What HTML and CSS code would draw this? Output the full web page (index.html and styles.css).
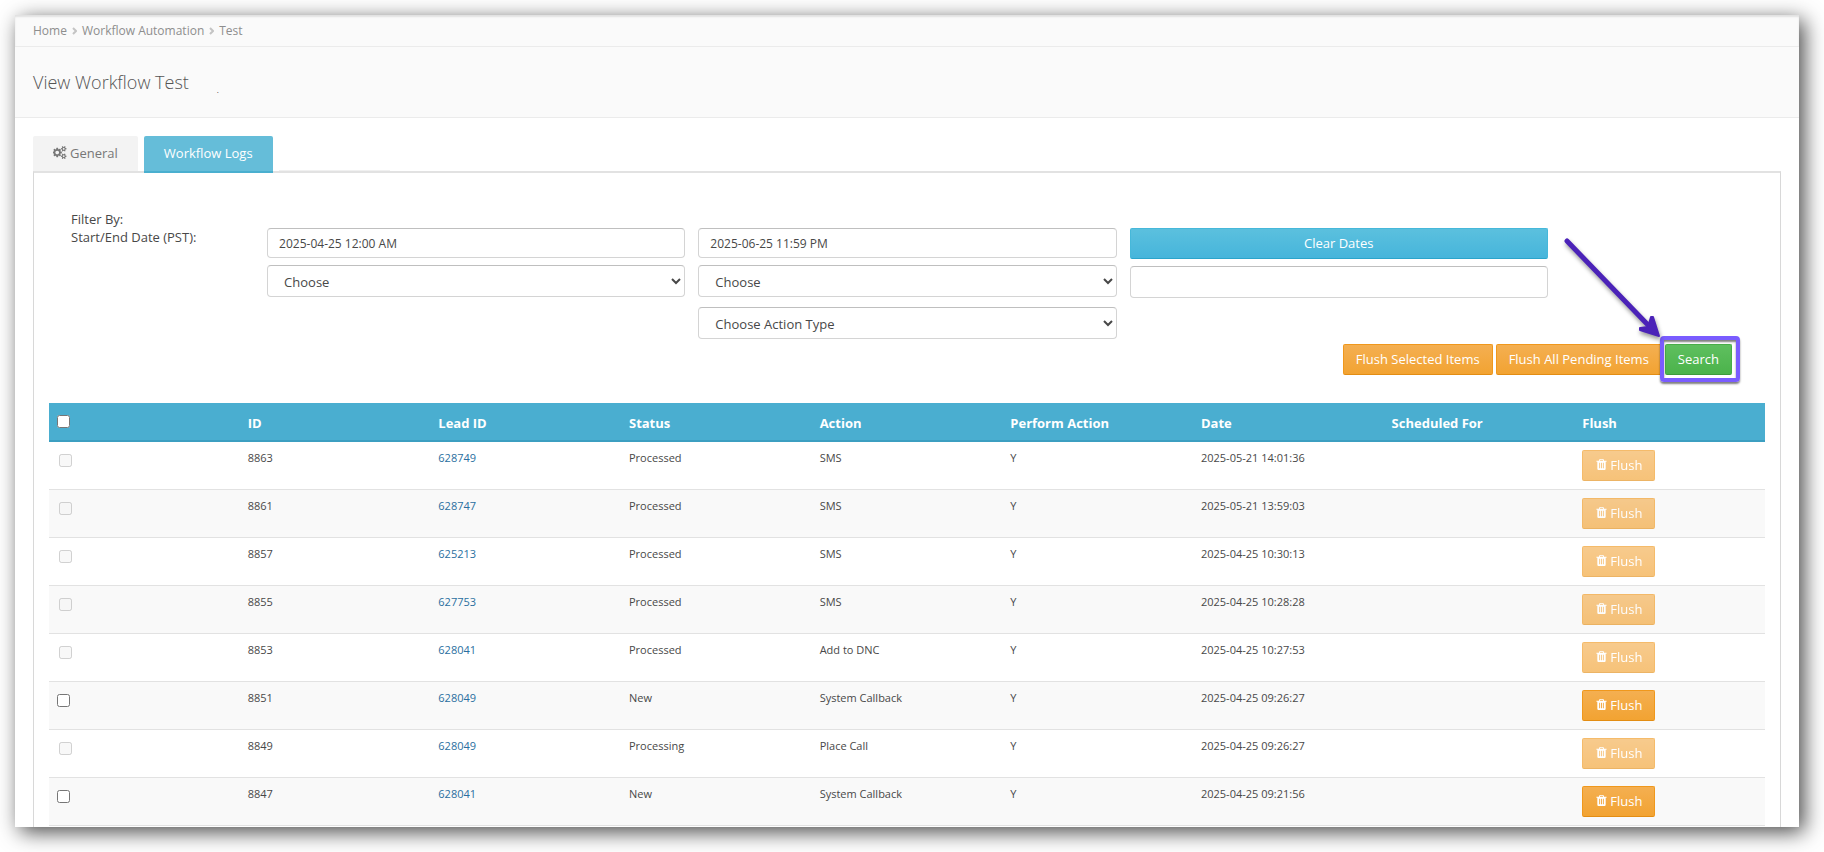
FILE: index.html
```html
<!DOCTYPE html>
<html lang="en">
<head>
    <meta charset="UTF-8">
    <meta name="viewport" content="width=device-width, initial-scale=1.0">
    <title>View Workflow Test</title>
    <link rel="stylesheet" href="styles.css">
</head>
<body>
    <!-- Icons -->
    <svg class="sprite" aria-hidden="true">
        <symbol id="icon-trash" viewBox="0 0 1792 1792">
            <path d="M704 1376v-704q0-14-9-23t-23-9h-64q-14 0-23 9t-9 23v704q0 14 9 23t23 9h64q14 0 23-9t9-23zm256 0v-704q0-14-9-23t-23-9h-64q-14 0-23 9t-9 23v704q0 14 9 23t23 9h64q14 0 23-9t9-23zm256 0v-704q0-14-9-23t-23-9h-64q-14 0-23 9t-9 23v704q0 14 9 23t23 9h64q14 0 23-9t9-23zm-544-992h448l-48-117q-7-9-17-11h-317q-10 2-17 11zm928 32v64q0 14-9 23t-23 9h-96v948q0 83-47 143.5t-113 60.5h-832q-66 0-113-58.5t-47-141.5v-952h-96q-14 0-23-9t-9-23v-64q0-14 9-23t23-9h309l70-167q15-37 54-63t79-26h320q40 0 79 26t54 63l70 167h309q14 0 23 9t9 23z"/>
        </symbol>
        <symbol id="icon-cogs" viewBox="0 0 1920 1792">
            <path d="M832 896q0-106-75-181t-181-75-181 75-75 181 75 181 181 75 181-75 75-181zm768 512q0-52-38-90t-90-38-90 38-38 90q0 53 37.5 90.5t90.5 37.5 90.5-37.5 37.5-90.5zm0-1024q0-52-38-90t-90-38-90 38-38 90q0 53 37.5 90.5t90.5 37.5 90.5-37.5 37.5-90.5zm-384 421v185q0 10-7 19.5t-16 10.5l-155 24q-11 35-32 76 34 48 90 115 7 11 7 20 0 12-7 19-23 30-82.5 89.5t-78.5 59.5q-11 0-21-7l-115-90q-37 19-77 31-11 108-23 155-7 24-30 24h-186q-11 0-20-7.5t-10-17.5l-23-153q-34-10-75-31l-118 89q-7 7-20 7-11 0-21-8-144-133-144-160 0-9 7-19 10-14 41-53t47-61q-23-44-35-82l-152-24q-10-1-17-9.5t-7-19.5v-185q0-10 7-19.5t16-10.5l155-24q11-35 32-76-34-48-90-115-7-11-7-20 0-12 7-20 22-30 82-89t79-59q11 0 21 7l115 90q34-18 77-32 11-108 23-154 7-24 30-24h186q11 0 20 7.5t10 17.5l23 153q34 10 75 31l118-89q8-7 20-7 11 0 21 8 144 133 144 160 0 8-7 19-12 16-42 54t-45 60q23 48 34 82l152 23q10 2 17 10.5t7 19.5zm640 533v140q0 16-149 31-12 27-30 52 51 113 51 138 0 4-4 7-122 71-124 71-8 0-46-47t-52-68q-20 2-30 2t-30-2q-14 21-52 68t-46 47q-2 0-124-71-4-3-4-7 0-25 51-138-18-25-30-52-149-15-149-31v-140q0-16 149-31 13-29 30-52-51-113-51-138 0-4 4-7 4-2 35-20t59-34 30-16q8 0 46 46.5t52 67.5q20-2 30-2t30 2q51-71 92-112l6-2q4 0 124 70 4 3 4 7 0 25-51 138 17 23 30 52 149 15 149 31zm0-1024v140q0 16-149 31-12 27-30 52 51 113 51 138 0 4-4 7-122 71-124 71-8 0-46-47t-52-68q-20 2-30 2t-30-2q-14 21-52 68t-46 47q-2 0-124-71-4-3-4-7 0-25 51-138-18-25-30-52-149-15-149-31v-140q0-16 149-31 13-29 30-52-51-113-51-138 0-4 4-7 4-2 35-20t59-34 30-16q8 0 46 46.5t52 67.5q20-2 30-2t30 2q51-71 92-112l6-2q4 0 124 70 4 3 4 7 0 25-51 138 17 23 30 52 149 15 149 31z"/>
        </symbol>
        <symbol id="icon-angle" viewBox="0 0 5 8">
            <path d="M1 1l3 3-3 3" fill="none" stroke="currentColor" stroke-width="2"/>
        </symbol>
    </svg>

    <div class="page">
        <nav class="breadcrumb">
            <a href="#">Home</a>
            <svg class="angle"><use href="#icon-angle"/></svg>
            <a href="#">Workflow Automation</a>
            <svg class="angle"><use href="#icon-angle"/></svg>
            <a href="#">Test</a>
        </nav>

        <header class="page-header">
            <h1>View Workflow Test</h1>
            <span class="dot">.</span>
        </header>

        <main class="content">
            <ul class="tabs">
                <li><a href="#" class="tab"><svg class="icon-cogs"><use href="#icon-cogs"/></svg>General</a></li>
                <li><a href="#" class="tab active">Workflow Logs</a></li>
                <li class="tab-empty"></li>
            </ul>

            <div class="panel">
                <form class="filters">
                    <div class="filter-labels">
                        <span>Filter By:</span>
                        <label for="startDate">Start/End Date (PST):</label>
                    </div>
                    <div class="filter-col">
                        <input type="text" id="startDate" class="field" value="2025-04-25 12:00 AM">
                        <select class="field" aria-label="Status"><option>Choose</option></select>
                    </div>
                    <div class="filter-col">
                        <input type="text" class="field" aria-label="End date" value="2025-06-25 11:59 PM">
                        <select class="field" aria-label="Action"><option>Choose</option></select>
                        <select class="field" aria-label="Action type"><option>Choose Action Type</option></select>
                    </div>
                    <div class="filter-col">
                        <button type="button" class="btn btn-info">Clear Dates</button>
                        <input type="text" class="field tall" aria-label="Keyword">
                    </div>
                </form>

                <div class="actions">
                    <button type="button" class="btn btn-warning">Flush Selected Items</button>
                    <button type="button" class="btn btn-warning">Flush All Pending Items</button>
                    <div class="search-wrap">
                        <button type="button" class="btn btn-success">Search</button>
                        <span class="highlight"></span>
                        <svg class="arrow" viewBox="0 0 110 110" aria-hidden="true">
                            <path d="M9 8L91 93" fill="none" stroke="#4b22b8" stroke-width="5" stroke-linecap="round"/>
                            <path d="M101 103L82 97L82 95L90 94L93 84L95 84Z" fill="#4b22b8" stroke="#4b22b8" stroke-width="2" stroke-linejoin="round"/>
                        </svg>
                    </div>
                </div>

                <table class="logs">
                    <thead>
                        <tr>
                            <th><input type="checkbox" aria-label="Select all"></th>
                            <th>ID</th>
                            <th>Lead ID</th>
                            <th>Status</th>
                            <th>Action</th>
                            <th>Perform Action</th>
                            <th>Date</th>
                            <th>Scheduled For</th>
                            <th>Flush</th>
                        </tr>
                    </thead>
                    <tbody>
                        <tr>
                            <td><input type="checkbox" aria-label="Select 8863" disabled></td>
                            <td>8863</td>
                            <td><a href="#">628749</a></td>
                            <td>Processed</td>
                            <td>SMS</td>
                            <td>Y</td>
                            <td>2025-05-21 14:01:36</td>
                            <td></td>
                            <td><button type="button" class="btn btn-warning" disabled><svg class="icon-trash"><use href="#icon-trash"/></svg>Flush</button></td>
                        </tr>
                        <tr>
                            <td><input type="checkbox" aria-label="Select 8861" disabled></td>
                            <td>8861</td>
                            <td><a href="#">628747</a></td>
                            <td>Processed</td>
                            <td>SMS</td>
                            <td>Y</td>
                            <td>2025-05-21 13:59:03</td>
                            <td></td>
                            <td><button type="button" class="btn btn-warning" disabled><svg class="icon-trash"><use href="#icon-trash"/></svg>Flush</button></td>
                        </tr>
                        <tr>
                            <td><input type="checkbox" aria-label="Select 8857" disabled></td>
                            <td>8857</td>
                            <td><a href="#">625213</a></td>
                            <td>Processed</td>
                            <td>SMS</td>
                            <td>Y</td>
                            <td>2025-04-25 10:30:13</td>
                            <td></td>
                            <td><button type="button" class="btn btn-warning" disabled><svg class="icon-trash"><use href="#icon-trash"/></svg>Flush</button></td>
                        </tr>
                        <tr>
                            <td><input type="checkbox" aria-label="Select 8855" disabled></td>
                            <td>8855</td>
                            <td><a href="#">627753</a></td>
                            <td>Processed</td>
                            <td>SMS</td>
                            <td>Y</td>
                            <td>2025-04-25 10:28:28</td>
                            <td></td>
                            <td><button type="button" class="btn btn-warning" disabled><svg class="icon-trash"><use href="#icon-trash"/></svg>Flush</button></td>
                        </tr>
                        <tr>
                            <td><input type="checkbox" aria-label="Select 8853" disabled></td>
                            <td>8853</td>
                            <td><a href="#">628041</a></td>
                            <td>Processed</td>
                            <td>Add to DNC</td>
                            <td>Y</td>
                            <td>2025-04-25 10:27:53</td>
                            <td></td>
                            <td><button type="button" class="btn btn-warning" disabled><svg class="icon-trash"><use href="#icon-trash"/></svg>Flush</button></td>
                        </tr>
                        <tr>
                            <td><input type="checkbox" aria-label="Select 8851"></td>
                            <td>8851</td>
                            <td><a href="#">628049</a></td>
                            <td>New</td>
                            <td>System Callback</td>
                            <td>Y</td>
                            <td>2025-04-25 09:26:27</td>
                            <td></td>
                            <td><button type="button" class="btn btn-warning"><svg class="icon-trash"><use href="#icon-trash"/></svg>Flush</button></td>
                        </tr>
                        <tr>
                            <td><input type="checkbox" aria-label="Select 8849" disabled></td>
                            <td>8849</td>
                            <td><a href="#">628049</a></td>
                            <td>Processing</td>
                            <td>Place Call</td>
                            <td>Y</td>
                            <td>2025-04-25 09:26:27</td>
                            <td></td>
                            <td><button type="button" class="btn btn-warning" disabled><svg class="icon-trash"><use href="#icon-trash"/></svg>Flush</button></td>
                        </tr>
                        <tr>
                            <td><input type="checkbox" aria-label="Select 8847"></td>
                            <td>8847</td>
                            <td><a href="#">628041</a></td>
                            <td>New</td>
                            <td>System Callback</td>
                            <td>Y</td>
                            <td>2025-04-25 09:21:56</td>
                            <td></td>
                            <td><button type="button" class="btn btn-warning"><svg class="icon-trash"><use href="#icon-trash"/></svg>Flush</button></td>
                        </tr>
                    </tbody>
                </table>
            </div>
        </main>
    </div>
</body>
</html>
```
FILE: styles.css
```css
* {
    box-sizing: border-box;
}

body {
    margin: 0;
    padding: 15px 25px 25px 15px;
    background: #fff;
    color: #484848;
    font-family: "Open Sans", "Noto Sans", sans-serif;
    font-size: 13px;
    line-height: 18px;
}

a {
    text-decoration: none;
}

.sprite {
    display: none;
}

.page {
    background: #fff;
    box-shadow: 5px 5px 20px rgba(0, 0, 0, 0.72);
}

/* Breadcrumb and title */
.breadcrumb {
    display: flex;
    align-items: center;
    gap: 5px;
    height: 32px;
    padding: 0 18px;
    background: #fafafa;
    border-bottom: 1px solid #ebebeb;
    box-shadow: inset 0 2px 2px rgba(0, 0, 0, 0.1);
    font-size: 12px;
}

.breadcrumb a {
    color: #8e8e8e;
}

.angle {
    width: 5px;
    height: 8px;
    color: #c4c4c4;
}

.page-header {
    display: flex;
    align-items: center;
    gap: 28px;
    height: 71px;
    padding: 0 18px;
    background: #fafafa;
    border-bottom: 1px solid #ebebeb;
}

.page-header h1 {
    margin: 0;
    color: #555;
    font-size: 18px;
    font-weight: 300;
}

.dot {
    padding-top: 16px;
    font-size: 8px;
}

.content {
    padding: 18px 18px 0;
}

/* Tabs */
.tabs {
    display: flex;
    align-items: flex-start;
    gap: 6px;
    height: 35px;
    margin: 0;
    padding: 0;
    list-style: none;
}

.tab {
    display: flex;
    align-items: center;
    gap: 3px;
    height: 35px;
    padding: 0 20px 2px;
    background: #f3f3f3;
    border-radius: 2px 2px 0 0;
    color: #777;
}

.tab.active {
    position: relative;
    height: 37px;
    background: #65bdd9;
    border-bottom: 2px solid #4aafcf;
    color: #fff;
    font-weight: 500;
}

.tab-empty {
    align-self: flex-end;
    width: 111px;
    border-bottom: 1px solid #f0f0f0;
}

.icon-cogs {
    width: 14px;
    height: 13px;
    fill: currentColor;
}

.panel {
    padding: 37px 15px 1px;
    border: 1px solid #d8d8d8;
    border-top: 2px solid #e2e2e2;
    border-bottom: 0;
}

/* Filters */
.filters {
    display: grid;
    grid-template-columns: 183fr 418fr 418fr 418fr 204fr;
    gap: 13px;
    padding-left: 22px;
}

.filter-labels {
    display: flex;
    flex-direction: column;
}

.filter-col {
    display: flex;
    flex-direction: column;
    padding-top: 18px;
}

.field {
    width: 100%;
    height: 30px;
    margin: 0 0 7px;
    padding: 0 11px;
    background: #fff;
    border: 1px solid #d4d4d4;
    border-top-color: #bfbfbf;
    border-radius: 4px;
    color: #484848;
    font-family: inherit;
    font-size: 12px;
}

select.field {
    height: 32px;
    margin-bottom: 10px;
    padding: 2px 12px 0;
    font-size: 13px;
}

.field.tall {
    height: 32px;
}

.btn {
    display: inline-flex;
    align-items: center;
    justify-content: center;
    height: 31px;
    padding: 0 12px 2px;
    border: 1px solid;
    border-radius: 2px;
    color: #fff;
    font-family: inherit;
    font-size: 13px;
    cursor: pointer;
}

.btn-info {
    margin-bottom: 7px;
    background: linear-gradient(#5bc0de, #46b5db);
    border-color: #46b8da #46b8da #2ba4cb;
}

.btn-warning {
    background: linear-gradient(#f4af51, #f2a332);
    border-color: #f0981c #f0981c #e38d13;
}

.btn-success {
    background: linear-gradient(#5fbf5f, #4bb34b);
    border-color: #48ad48 #48ad48 #3d9a3d;
}

.btn:disabled {
    opacity: 0.65;
}

.actions {
    display: flex;
    justify-content: flex-end;
    gap: 3px;
    margin-top: -5px;
    padding-right: 33px;
}

/* Search button with the callout drawn over it */
.search-wrap {
    position: relative;
}

.highlight {
    position: absolute;
    top: -8px;
    right: -8px;
    bottom: -7px;
    left: -5px;
    border: 4px solid #7a5cff;
    border-radius: 4px;
    box-shadow: 0 2px 2px rgba(0, 0, 0, 0.5), inset 0 2px 2px rgba(0, 0, 0, 0.5);
    pointer-events: none;
}

.arrow {
    position: absolute;
    right: 64px;
    bottom: 32px;
    width: 110px;
    height: 110px;
    filter: drop-shadow(1px 3px 2px rgba(0, 0, 0, 0.4));
    pointer-events: none;
}

/* Logs table */
.logs {
    width: 100%;
    margin-top: 28px;
    border-collapse: separate;
    border-spacing: 0;
    table-layout: fixed;
}

.logs th {
    height: 39px;
    padding: 2px 8px 0;
    background: #4aaed0;
    border-bottom: 2px solid #3c9fc1;
    color: #fff;
    font-weight: 700;
    text-align: left;
}

.logs td {
    height: 48px;
    padding: 8px 8px 7px;
    border-bottom: 1px solid #e2e2e2;
    font-size: 11px;
    line-height: 16px;
    vertical-align: top;
}

.logs tbody tr:nth-child(even) td {
    background: #f9f9f9;
}

.logs td a {
    color: #2a6fa0;
}

.logs input {
    display: block;
    width: 13px;
    height: 13px;
    margin: 4px 0 0;
}

.logs th input {
    margin: 0 0 2px;
}

.logs input:disabled {
    margin-left: 2px;
}

.logs .btn {
    gap: 2px;
}

.icon-trash {
    width: 13px;
    height: 13px;
    fill: currentColor;
}
```
